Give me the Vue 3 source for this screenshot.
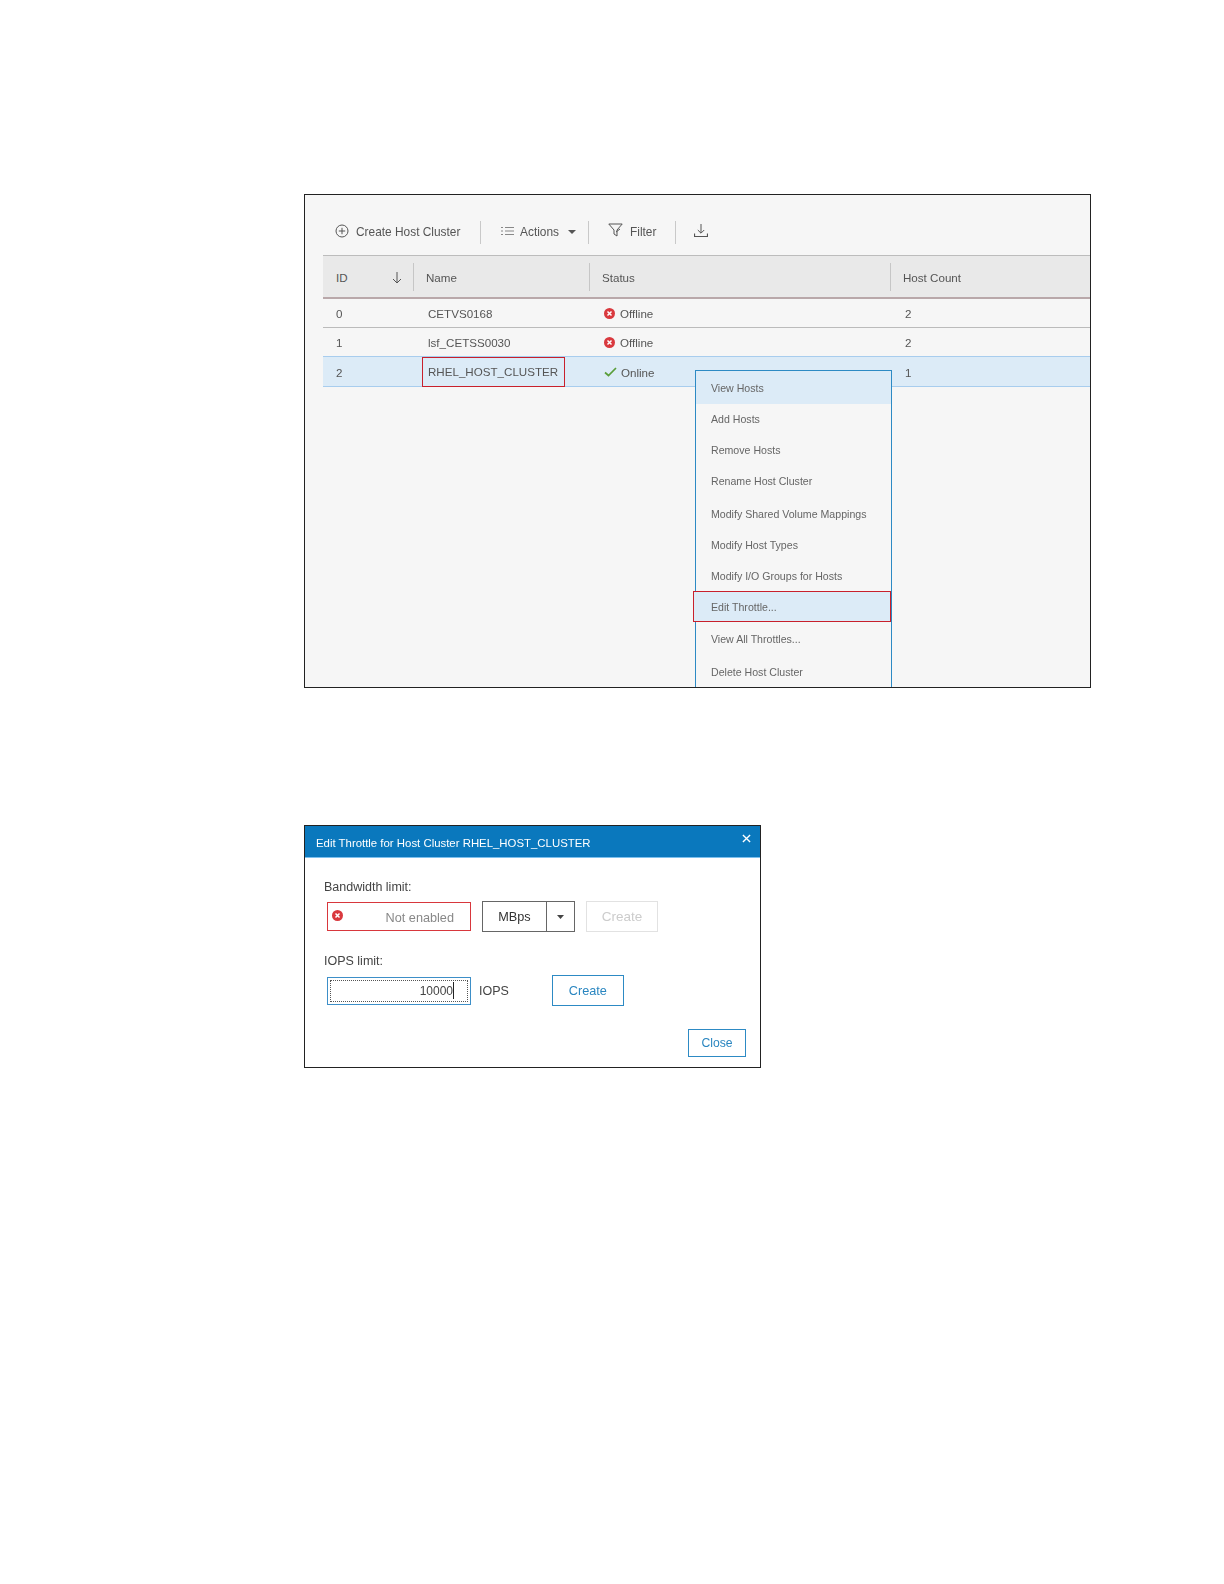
<script setup>
const rows = [
  { id: '0', name: 'CETVS0168', status: 'Offline', count: '2' },
  { id: '1', name: 'lsf_CETSS0030', status: 'Offline', count: '2' },
  { id: '2', name: 'RHEL_HOST_CLUSTER', status: 'Online', count: '1', selected: true },
]
const menu = [
  { label: 'View Hosts', h: 33, cls: 'hover' },
  { label: 'Add Hosts', h: 30 },
  { label: 'Remove Hosts', h: 31 },
  { label: 'Rename Host Cluster', h: 32 },
  { label: 'Modify Shared Volume Mappings', h: 33 },
  { label: 'Modify Host Types', h: 30 },
  { label: 'Modify I/O Groups for Hosts', h: 32 },
  { label: 'Edit Throttle...', h: 29, cls: 'marked' },
  { label: 'View All Throttles...', h: 35 },
  { label: 'Delete Host Cluster', h: 32 },
]
</script>

<template>
  <div class="page">
    <section class="frame list">
      <div class="toolbar">
        <div class="tool create">
          <svg width="14" height="14" viewBox="0 0 14 14" fill="none" stroke="#555" stroke-width="1"><circle cx="7" cy="7" r="6" /><path d="M7 3.8v6.4M3.8 7h6.4" /></svg>
          <span>Create Host Cluster</span>
        </div>
        <i class="tool-sep"></i>
        <div class="tool actions">
          <svg width="13" height="10" viewBox="0 0 13 10" stroke="#888" fill="none"><path d="M0 1.5h2M4 1.5h9M0 5h2M4 5h9M0 8.5h2M4 8.5h9" /></svg>
          <span>Actions</span>
          <svg class="caret" width="8" height="4" viewBox="0 0 8 4"><path d="M0 0h8L4 4z" fill="#555" /></svg>
        </div>
        <i class="tool-sep"></i>
        <div class="tool filter">
          <svg width="15" height="15" viewBox="0 0 15 15" fill="none" stroke="#555"><path d="M.8 1h13.4L9 7v6L6 11V7z" /><path d="M8 9l4-3" /></svg>
          <span>Filter</span>
        </div>
        <i class="tool-sep"></i>
        <div class="tool download">
          <svg width="14" height="14" viewBox="0 0 14 14" fill="none" stroke="#555"><path d="M7 0v9M3.8 6L7 9.2 10.2 6" /><path d="M.5 9.5v3h13v-3" stroke-width="1.2" /></svg>
        </div>
      </div>

      <div class="table">
        <div class="cols head">
          <div class="hcell first"><span>ID</span>
            <svg width="10" height="12" viewBox="0 0 10 12" fill="none" stroke="#555"><path d="M5 0v11M1 7l4 4 4-4" /></svg>
          </div>
          <div class="hcell">Name</div>
          <div class="hcell">Status</div>
          <div class="hcell">Host Count</div>
        </div>
        <div v-for="r in rows" :key="r.id" class="cols row" :class="{ selected: r.selected }">
          <div class="cell first">{{ r.id }}</div>
          <div class="cell name"><span :class="{ 'red-box': r.selected }">{{ r.name }}</span></div>
          <div class="cell status" :class="{ ok: r.status === 'Online' }">
            <svg v-if="r.status === 'Offline'" width="11" height="11" viewBox="0 0 11 11"><circle cx="5.5" cy="5.5" r="5.5" fill="#d9393e" /><path d="M3.5 3.5l4 4M7.5 3.5l-4 4" stroke="#fff" stroke-width="1.5" /></svg>
            <svg v-else width="13" height="10" viewBox="0 0 13 10" fill="none"><path d="M1 5.5l3.5 3L12 1" stroke="#5a9e3a" stroke-width="1.7" /></svg>
            <span>{{ r.status }}</span>
          </div>
          <div class="cell count">{{ r.count }}</div>
        </div>
      </div>

      <ul class="menu">
        <li v-for="m in menu" :key="m.label" :class="m.cls" :style="{ height: m.h + 'px' }">{{ m.label }}</li>
      </ul>
    </section>

    <section class="frame dialog">
      <header class="title">
        <span>Edit Throttle for Host Cluster RHEL_HOST_CLUSTER</span>
        <svg width="9" height="9" viewBox="0 0 10 10" stroke="#fff" stroke-width="1.5"><path d="M1 1l8 8M9 1l-8 8" /></svg>
      </header>
      <div class="body">
        <div class="label">Bandwidth limit:</div>
        <div class="line band">
          <div class="field error">
            <svg width="11" height="11" viewBox="0 0 11 11"><circle cx="5.5" cy="5.5" r="5.5" fill="#d9393e" /><path d="M3.5 3.5l4 4M7.5 3.5l-4 4" stroke="#fff" stroke-width="1.5" /></svg>
            <span>Not enabled</span>
          </div>
          <div class="select">
            <span class="sel-value">MBps</span>
            <span class="sel-arrow"><svg width="7" height="4" viewBox="0 0 7 4"><path d="M0 0h7L3.5 4z" fill="#444" /></svg></span>
          </div>
          <button class="btn off">Create</button>
        </div>
        <div class="label second">IOPS limit:</div>
        <div class="line iops">
          <div class="field focus"><div class="dotted"><span>10000</span><i class="cursor"></i></div></div>
          <span class="unit">IOPS</span>
          <button class="btn on">Create</button>
        </div>
        <div class="foot"><button class="btn close">Close</button></div>
      </div>
    </section>
  </div>
</template>

<style>
html, body { margin: 0; background: #fff; }
</style>

<style scoped>
.page {
  width: 1224px;
  height: 1584px;
  box-sizing: border-box;
  padding: 194px 0 0 304px;
  font-family: "Liberation Sans", Arial, sans-serif;
  font-size: 12px;
  color: #555;
  overflow: hidden;
}
.frame { box-sizing: border-box; border: 1px solid #222; position: relative; overflow: hidden; }
.list { width: 787px; height: 494px; background: #f6f6f6; }

.toolbar { height: 60px; display: flex; align-items: center; padding: 14px 0 0 30px; box-sizing: border-box; font-size: 11.9px; filter: blur(.35px); }
.tool { display: flex; align-items: center; }
.tool-sep { width: 1px; height: 23px; background: #c9c9c9; }
.create { width: 145px; gap: 7px; }
.create svg { margin-top: -2px; }
.actions { width: 107px; padding-left: 20px; box-sizing: border-box; gap: 6px; }
.actions svg { margin-top: -2px; }
.actions .caret { margin: 0 0 0 3px; }
.filter { width: 86px; padding-left: 19px; box-sizing: border-box; gap: 7px; }
.filter svg { margin-top: -3px; }
.download { padding-left: 18px; }
.download svg { margin-top: -3px; }

.table { margin-left: 18px; font-size: 11.6px; filter: blur(.35px); }
.cols { display: grid; grid-template-columns: 90px 176px 301px 1fr; align-items: center; }
.head { height: 44px; background: #e9e9e9; border-top: 1px solid #bcbcbc; border-bottom: 2px solid #b9a8aa; box-sizing: border-box; }
.hcell { height: 28px; display: flex; align-items: center; padding: 2px 0 0 12px; border-left: 1px solid #c6c6c6; box-sizing: border-box; }
.hcell.first { border-left: 0; padding: 2px 11px 0 13px; justify-content: space-between; }
.row { height: 29px; border-bottom: 1px solid #bbb; box-sizing: border-box; }
.row.selected { height: 31px; background: #dcebf7; border-top: 1px solid #a8cdee; border-bottom: 1px solid #a8cdee; margin-top: -1px; }
.cell { padding: 0 0 0 14px; }
.cell.first { padding-left: 13px; }
.name { padding-left: 15px; }
.selected .name { padding-left: 9px; }
.red-box { display: flex; align-items: center; width: 143px; height: 30px; box-sizing: border-box; padding: 0 0 2px 5px; border: 1px solid #c8202c; }
.status { display: flex; align-items: center; gap: 5px; padding-left: 15px; }
.status.ok { gap: 4px; }
.count { padding-left: 15px; }

.menu {
  position: absolute;
  left: 390px;
  top: 175px;
  width: 197px;
  margin: 0;
  padding: 0;
  list-style: none;
  box-sizing: border-box;
  border: 1px solid #2d8ac4;
  background: #f6f6f6;
  font-size: 10.6px;
  color: #666;
  filter: blur(.3px);
}
.menu li { display: flex; align-items: center; padding-left: 15px; box-sizing: border-box; }
.menu li.hover { background: #dcebf7; }
.menu li.marked { background: #dcebf7; outline: 1px solid #c8202c; margin: 0 1px 0 -2px; padding-left: 17px; }

.dialog { width: 457px; height: 243px; margin-top: 137px; background: #fff; }
.title {
  height: 32px;
  background: #0a78bd;
  border-bottom: 1px solid #7cc0ee;
  box-sizing: border-box;
  color: #fff;
  display: flex;
  justify-content: space-between;
  padding: 2px 9px 0 11px;
  align-items: center;
  font-size: 11.4px;
}
.title span { filter: blur(.3px); }
.title svg { margin-top: -9px; }
.body { padding: 21px 9px 0 19px; filter: blur(.3px); }
.label { font-size: 12.5px; line-height: 16px; color: #444; }
.label.second { margin-top: 21px; }
.line { display: flex; align-items: center; margin-left: 3px; margin-top: 6px; }
.field { width: 144px; height: 29px; box-sizing: border-box; border: 1px solid #d8373d; display: flex; align-items: center; }
.field.error { padding: 0 16px 0 4px; justify-content: space-between; font-size: 12.7px; }
.field.error svg { margin-top: -3px; }
.field.error span { color: #888; margin-top: 2px; }
.field.focus { border-color: #3d8fc8; padding: 2px; height: 28px; }
.dotted { flex: 1; height: 100%; box-sizing: border-box; border: 1px dotted #555; display: flex; align-items: center; justify-content: flex-end; padding-right: 13px; color: #444; }
.cursor { width: 1px; height: 17px; background: #222; }
.select { width: 93px; height: 31px; margin-left: 11px; box-sizing: border-box; border: 1.5px solid #666; display: flex; color: #333; font-size: 12.7px; }
.sel-value { width: 64px; padding-top: 1px; box-sizing: border-box; border-right: 1.5px solid #666; display: flex; align-items: center; justify-content: center; }
.sel-arrow { flex: 1; display: flex; align-items: center; justify-content: center; }
.btn { font: inherit; background: #fff; padding: 0; box-sizing: border-box; display: block; }
.btn.off { width: 72px; height: 31px; margin-left: 11px; border: 1.5px solid #e2e2e2; color: #ccc; font-size: 13.5px; }
.unit { margin-left: 8px; color: #444; font-size: 12.5px; }
.btn.on { width: 72px; height: 31px; margin-left: 43px; border: 1.5px solid #2d8ac4; color: #2a86c0; font-size: 12.7px; }
.foot { display: flex; justify-content: flex-end; margin-top: 23px; padding-right: 5px; }
.btn.close { width: 58px; height: 28px; border: 1.5px solid #2d8ac4; color: #2a86c0; font-size: 12.2px; }
</style>
